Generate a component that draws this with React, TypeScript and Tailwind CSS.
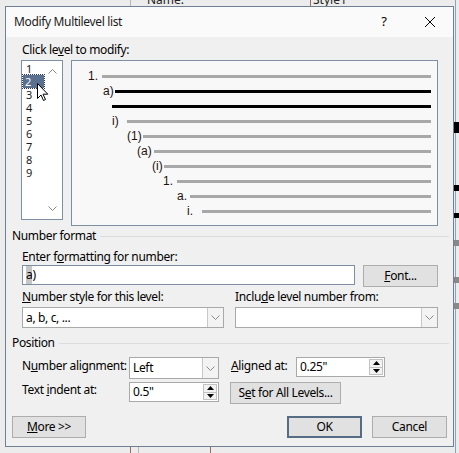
import React from 'react'

const font = { fontFamily: '"Noto Sans", "Liberation Sans", sans-serif' }

// preview rows: number start, line start (relative to preview inner left), colour
const rows = [
  { num: '1.', pad: 'w-[16px]', gap: 'w-[14px]', line: 'bg-[#a8a8a8]' },
  { num: 'a)', pad: 'w-[31px]', gap: 'w-[12px]', line: 'bg-black' },
  { num: '', pad: 'w-[40px]', gap: 'w-0', line: 'bg-black' },
  { num: 'i)', pad: 'w-[40px]', gap: 'w-[15px]', line: 'bg-[#a8a8a8]' },
  { num: '(1)', pad: 'w-[55px]', gap: 'w-[16px]', line: 'bg-[#a8a8a8]' },
  { num: '(a)', pad: 'w-[65px]', gap: 'w-[17px]', line: 'bg-[#a8a8a8]' },
  { num: '(i)', pad: 'w-[80px]', gap: 'w-[12px]', line: 'bg-[#a8a8a8]' },
  { num: '1.', pad: 'w-[91px]', gap: 'w-[14px]', line: 'bg-[#a8a8a8]' },
  { num: 'a.', pad: 'w-[105px]', gap: 'w-[13px]', line: 'bg-[#a8a8a8]' },
  { num: 'i.', pad: 'w-[115px]', gap: 'w-[15px]', line: 'bg-[#a8a8a8]' },
]

function Chevron({ up = false }: { up?: boolean }) {
  return (
    <svg width="9" height="5" viewBox="0 0 9 5" className={up ? 'rotate-180' : ''}>
      <path d="M0.5 0.5 L4.5 4.5 L8.5 0.5" fill="none" stroke="#8a8a8a" strokeWidth="1" />
    </svg>
  )
}

function Select({ value, className }: { value: string; className: string }) {
  return (
    <div className={`flex bg-white border border-[#a9a9a9] ${className}`}>
      <div className="flex-1 flex items-center pl-[3px] text-[12px] text-black whitespace-nowrap">{value}</div>
      <div className="w-[16px] flex items-center justify-center bg-[#f3f3f3] border-l border-[#c8c8c8]">
        <Chevron />
      </div>
    </div>
  )
}

function Spin({ value, className }: { value: string; className: string }) {
  return (
    <div className={`flex bg-white border border-[#a9a9a9] ${className}`}>
      <div className="flex-1 flex items-center pl-[3px] text-[12px] text-black">{value}</div>
      <div className="w-[15px] flex flex-col py-[1px] pr-[1px]">
        <div className="flex-1 flex items-center justify-center border border-[#c2c2c2] bg-[#f2f2f2]">
          <svg width="7" height="4" viewBox="0 0 7 4"><path d="M0 4 L3.5 0 L7 4 Z" fill="#000" /></svg>
        </div>
        <div className="flex-1 flex items-center justify-center border border-[#c2c2c2] border-t-0 bg-[#f2f2f2]">
          <svg width="7" height="4" viewBox="0 0 7 4"><path d="M0 0 L3.5 4 L7 0 Z" fill="#000" /></svg>
        </div>
      </div>
    </div>
  )
}

function Btn({ children, className }: { children: React.ReactNode; className: string }) {
  return (
    <div className={`flex items-center justify-center bg-[#e1e1e1] text-[12px] text-black whitespace-nowrap ${className}`}>
      {children}
    </div>
  )
}

function Section({ title }: { title: string }) {
  return (
    <div className="flex items-center h-[16px] pl-[6px] pr-[4px] text-[12px] text-black whitespace-nowrap">
      <span>{title}</span>
      <div className="flex-1 h-px bg-[#dcdcdc] ml-[4px]" />
    </div>
  )
}

export default function App() {
  return (
    <div className="relative w-[459px] h-[453px] bg-[#ececec] overflow-hidden" style={font}>
      {/* window behind the dialog */}
      <div className="absolute inset-0">
        <div className="absolute left-[130px] top-0 w-px h-[6px] bg-[#b8b8b8]" />
        <div className="absolute left-[147px] top-[-9px] text-[12px] text-[#222]">Name:</div>
        <div className="absolute left-[310px] top-0 w-px h-[6px] bg-[#9a6a6a]" />
        <div className="absolute left-[313px] top-[-9px] text-[12px] text-[#222]">Style1</div>
        <div className="absolute left-[455px] top-0 w-px h-[453px] bg-[#8fa2bb]" />
        <div className="absolute left-[453px] top-[122px] w-[6px] h-[11px] bg-black" />
        <div className="absolute left-[453px] top-[185px] w-[6px] h-[6px] bg-black" />
        <div className="absolute left-[453px] top-[213px] w-[6px] h-[5px] bg-black" />
        <div className="absolute left-[453px] top-[240px] w-[6px] h-[6px] bg-[#888]" />
        <div className="absolute left-[453px] top-[277px] w-[6px] h-[6px] bg-[#888]" />
        <div className="absolute left-[453px] top-[303px] w-[6px] h-[6px] bg-[#888]" />
        <div className="absolute left-[130px] top-[446px] w-px h-[7px] bg-[#9a6a6a]" />
        <div className="absolute left-[138px] top-[446px] w-px h-[7px] bg-[#b8b8b8]" />
        <div className="absolute left-[210px] top-[446px] w-px h-[7px] bg-[#9a6a6a]" />
      </div>

      {/* dialog */}
      <div className="absolute left-[5px] top-[6px] w-[449px] h-[441px] border border-[#6f7f94] bg-[#f0f0f0] flex flex-col text-black tracking-[-0.35px]">
        <div className="h-[30px] flex items-center bg-[#fafafa] pl-[8px] text-[12px] whitespace-nowrap">
          <span className="text-[#1a1a1a]">Modify Multilevel list</span>
          <div className="flex-1" />
          <div className="w-[46px] h-full flex items-center justify-center text-[13px]">?</div>
          <div className="w-[46px] h-full flex items-center justify-center">
            <svg width="10" height="10" viewBox="0 0 10 10">
              <path d="M0 0 L10 10 M10 0 L0 10" stroke="#000" strokeWidth="1" />
            </svg>
          </div>
        </div>

        <div className="mt-[5px] pl-[16px] h-[16px] leading-[16px] text-[12px] whitespace-nowrap">
          Click le<span className="underline">v</span>el to modify:
        </div>

        <div className="mt-[2px] pl-[15px] flex items-start gap-[8px]">
          <div className="relative w-[42px] h-[160px] bg-white border border-[#7f8fa3] pt-[1px]">
            <div className="flex flex-col">
              {['1', '2', '3', '4', '5', '6', '7', '8', '9'].map((n) => (
                <div
                  key={n}
                  className={
                    n === '2'
                      ? 'ml-[1px] w-[21px] h-[13px] leading-[13px] pl-[2px] text-[11px] text-white bg-[#5a7091] outline outline-1 outline-dotted outline-[#2c3a4c]'
                      : 'ml-[1px] w-[21px] h-[13px] leading-[13px] pl-[3px] text-[11px] text-[#1a1a1a]'
                  }
                >
                  {n}
                </div>
              ))}
            </div>
            <div className="absolute right-[5px] top-[8px]">
              <Chevron up />
            </div>
            <div className="absolute right-[5px] bottom-[8px]">
              <Chevron />
            </div>
            <svg className="absolute left-[15px] top-[22px]" width="13" height="19" viewBox="0 0 13 19">
              <path d="M0.5 0.5 L0.5 15.5 L4 12 L6.5 17.5 L8.5 16.5 L6 11.2 L10.8 11.2 Z" fill="#fff" stroke="#000" strokeWidth="1" strokeLinejoin="round" />
            </svg>
          </div>

          <div className="w-[367px] h-[166px] bg-[#f8f8f8] border border-[#7f8fa3] pt-[8px] pr-[6px] tracking-normal">
            {rows.map((r, i) => (
              <div key={i} className="flex items-center h-[15px]">
                <div className={`shrink-0 ${r.pad}`} />
                <div
                  className={`shrink-0 ${r.gap} text-[12px] leading-[15px] text-[#1f1010] whitespace-nowrap`}
                  style={{ fontFamily: '"Liberation Sans", Arial, sans-serif' }}
                >
                  {r.num}
                </div>
                <div className={`flex-1 h-[3px] ${r.line}`} />
              </div>
            ))}
          </div>
        </div>

        <div className="mt-[2px]">
          <Section title="Number format" />
        </div>

        <div className="mt-[5px] pl-[16px] h-[16px] leading-[16px] text-[12px] whitespace-nowrap">
          Enter f<span className="underline">o</span>rmatting for number:
        </div>

        <div className="pl-[16px] flex items-start">
          <div className="w-[333px] h-[20px] bg-white border border-[#7f8fa3] flex items-center pl-[3px] text-[12px]">
            <span className="bg-[#c6c6c6]">a</span>)
          </div>
          <Btn className="ml-[8px] w-[75px] h-[22px] border border-[#adadad]">
            <span className="underline">F</span>ont...
          </Btn>
        </div>

        <div className="mt-[2px] pl-[16px] flex text-[12px] h-[16px] leading-[16px] whitespace-nowrap">
          <div className="w-[213px]">
            <span className="underline">N</span>umber style for this level:
          </div>
          <div>
            Inclu<span className="underline">d</span>e level number from:
          </div>
        </div>

        <div className="mt-[2px] pl-[16px] flex gap-[11px]">
          <Select value="a, b, c, ..." className="w-[202px] h-[21px]" />
          <Select value="" className="w-[203px] h-[21px]" />
        </div>

        <div className="mt-[7px]">
          <Section title="Position" />
        </div>

        <div className="mt-[6px] pl-[16px] flex items-start text-[12px] whitespace-nowrap">
          <div className="w-[107px] mt-[1px] h-[16px] leading-[16px]">
            N<span className="underline">u</span>mber alignment:
          </div>
          <Select value="Left" className="w-[90px] h-[22px]" />
          <div className="ml-[12px] w-[65px] mt-[1px] h-[16px] leading-[16px]">
            <span className="underline">A</span>ligned at:
          </div>
          <Spin value={'0.25"'} className="w-[89px] h-[20px]" />
        </div>

        <div className="mt-[3px] pl-[16px] flex items-start text-[12px] whitespace-nowrap">
          <div className="w-[107px] h-[16px] leading-[16px]">
            Text <span className="underline">i</span>ndent at:
          </div>
          <Spin value={'0.5"'} className="w-[90px] h-[20px]" />
          <Btn className="ml-[11px] w-[111px] h-[22px] border border-[#adadad]">
            S<span className="underline">e</span>t for All Levels...
          </Btn>
        </div>

        <div className="mt-[12px] pl-[6px] flex">
          <Btn className="w-[74px] h-[22px] border border-[#adadad]">
            <span className="underline">M</span>ore &gt;&gt;
          </Btn>
          <div className="flex-1" />
          <Btn className="w-[75px] h-[22px] border-2 border-[#566b84]">OK</Btn>
          <Btn className="ml-[10px] mr-[6px] w-[75px] h-[22px] border border-[#adadad]">Cancel</Btn>
        </div>
      </div>
    </div>
  )
}
